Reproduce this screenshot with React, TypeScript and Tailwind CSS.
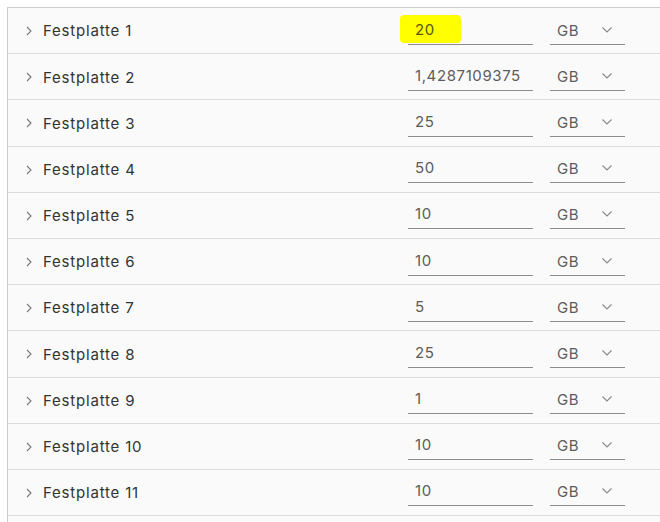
const disks = [
  { name: "Festplatte 1", size: "20", mark: true },
  { name: "Festplatte 2", size: "1,4287109375" },
  { name: "Festplatte 3", size: "25" },
  { name: "Festplatte 4", size: "50" },
  { name: "Festplatte 5", size: "10" },
  { name: "Festplatte 6", size: "10" },
  { name: "Festplatte 7", size: "5" },
  { name: "Festplatte 8", size: "25" },
  { name: "Festplatte 9", size: "1" },
  { name: "Festplatte 10", size: "10" },
  { name: "Festplatte 11", size: "10" },
];

const ChevronRight = () => (
  <svg width="8" height="10" viewBox="0 0 8 10" className="text-[#777]">
    <path d="M2 1l4 4-4 4" fill="none" stroke="currentColor" strokeWidth="1.1" />
  </svg>
);

const ChevronDown = () => (
  <svg width="12" height="8" viewBox="0 0 12 8" className="text-[#888]">
    <path d="M1.5 1.5l4.5 4.5 4.5-4.5" fill="none" stroke="currentColor" strokeWidth="1.1" />
  </svg>
);

const DiskRow = ({ name, size, mark }: { name: string; size: string; mark?: boolean }) => (
  <div className="flex items-center h-[46.2px] border-b border-[#dcdcdc]">
    <div className="ml-[17px] w-[18px] flex items-center pt-[1px]">
      <ChevronRight />
    </div>
    <div className="flex-1 text-[15px] tracking-[0.8px] text-[#333] pt-[2px]">{name}</div>
    <div className="relative w-[125px] h-[29px] mt-[-1px] border-b border-[#8c8c8c]">
      {mark && (
        <div className="absolute left-[-8px] top-[-1px] w-[61px] h-[28px] bg-[#ffff00] rounded-[4px]" />
      )}
      <span
        className={`relative block pl-[7px] pt-[3px] text-[15px] tracking-[0.6px] leading-[22px] ${
          mark ? "text-[#56560c]" : "text-[#5c5c5c]"
        }`}
      >
        {size}
      </span>
    </div>
    <div className="ml-[17px] mr-[35px] w-[75px] h-[29px] mt-[-1px] border-b border-[#8c8c8c] flex items-start justify-between pl-[7px] pr-[12px]">
      <span className="text-[15px] tracking-[0.6px] leading-[22px] pt-[4px] text-[#5c5c5c]">GB</span>
      <span className="pt-[10px]">
        <ChevronDown />
      </span>
    </div>
  </div>
);

export default function App() {
  return (
    <div
      className="w-[660px] h-[522px] overflow-hidden bg-white pt-[7px] pl-[7px]"
      style={{ fontFamily: "Inter, 'Noto Sans', sans-serif" }}
    >
      <div className="border-l border-t border-[#cccccc] bg-[#fafafa]">
        {disks.map((d) => (
          <DiskRow key={d.name} {...d} />
        ))}
        <div className="h-[46px]" />
      </div>
    </div>
  );
}
